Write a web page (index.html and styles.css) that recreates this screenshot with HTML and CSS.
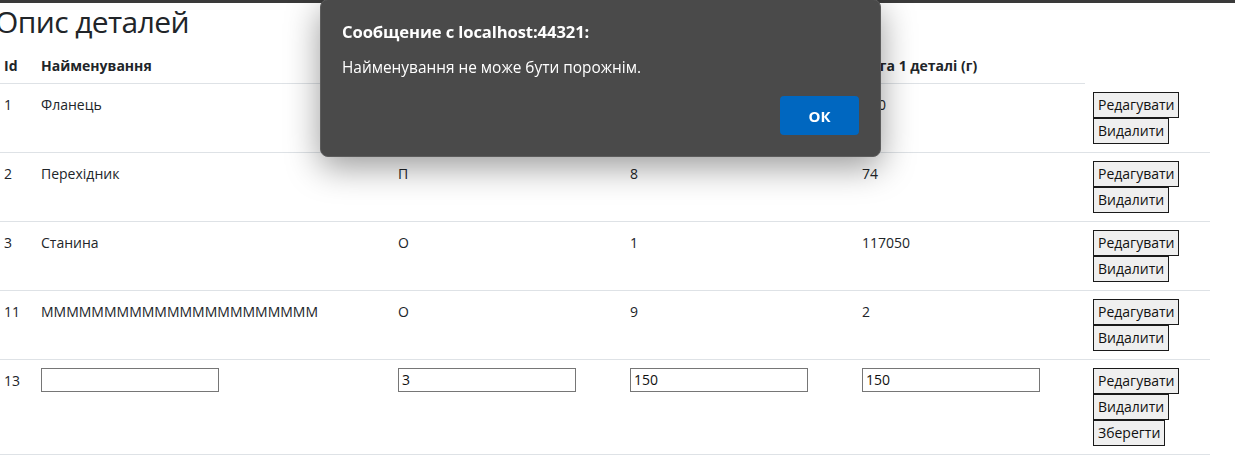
FILE: index.html
```html
<!DOCTYPE html>
<html lang="uk">
<head>
<meta charset="utf-8">
<title>Опис деталей</title>
<link rel="stylesheet" href="styles.css">
</head>
<body>
<div class="topbar"></div>
<main class="page">
  <h3 class="title">Опис деталей</h3>
  <table class="parts">
    <colgroup>
      <col class="c-id"><col class="c-name"><col class="c-type"><col class="c-qty"><col class="c-weight"><col class="c-actions">
    </colgroup>
    <thead>
      <tr>
        <th>Id</th>
        <th>Найменування</th>
        <th>Тип</th>
        <th>Кількість</th>
        <th>Вага 1 деталі (г)</th>
      </tr>
    </thead>
    <tbody>
      <tr>
        <td>1</td><td>Фланець</td><td>О</td><td>4</td><td>150</td>
        <td class="act-cell"><div class="actions"><button class="btn">Редагувати</button><button class="btn">Видалити</button></div></td>
      </tr>
      <tr>
        <td>2</td><td>Перехідник</td><td>П</td><td>8</td><td>74</td>
        <td class="act-cell"><div class="actions"><button class="btn">Редагувати</button><button class="btn">Видалити</button></div></td>
      </tr>
      <tr>
        <td>3</td><td>Станина</td><td>О</td><td>1</td><td>117050</td>
        <td class="act-cell"><div class="actions"><button class="btn">Редагувати</button><button class="btn">Видалити</button></div></td>
      </tr>
      <tr>
        <td>11</td><td>MMMMMMMMMMMMMMMMMMMMMM</td><td>О</td><td>9</td><td>2</td>
        <td class="act-cell"><div class="actions"><button class="btn">Редагувати</button><button class="btn">Видалити</button></div></td>
      </tr>
      <tr>
        <td>13</td>
        <td class="input-cell"><input class="field" type="text" value=""></td>
        <td class="input-cell"><input class="field" type="text" value="3"></td>
        <td class="input-cell"><input class="field" type="text" value="150"></td>
        <td class="input-cell"><input class="field" type="text" value="150"></td>
        <td class="act-cell"><div class="actions"><button class="btn">Редагувати</button><button class="btn">Видалити</button><button class="btn">Зберегти</button></div></td>
      </tr>
    </tbody>
  </table>
</main>

<div class="alert" role="alertdialog">
  <div class="alert-title">Сообщение с localhost:44321:</div>
  <div class="alert-msg">Найменування не може бути порожнім.</div>
  <div class="alert-actions"><button class="alert-ok">ОК</button></div>
</div>
</body>
</html>
```
FILE: styles.css
```css
html, body {
  margin: 0;
  padding: 0;
  background: #fff;
}
body {
  font-family: "Open Sans", "Noto Sans", sans-serif;
  font-size: 14px;
  line-height: 24px;
  color: #212529;
  overflow: hidden;
}
.topbar {
  height: 3px;
  background: #3a3a3a;
}
.page {
  margin-left: -4px;
}
.title {
  margin: 0 0 4px -1px;
  font-size: 30px;
  font-weight: 500;
  line-height: 38px;
  color: #212529;
  letter-spacing: -0.6px;
}
.parts {
  width: 1214px;
  border-collapse: collapse;
  table-layout: fixed;
}
.c-id { width: 37px; }
.c-name { width: 357px; }
.c-type { width: 232px; }
.c-qty { width: 232px; }
.c-weight { width: 231px; }
.c-actions { width: 125px; }
.parts th {
  text-align: left;
  font-weight: 700;
  padding: 9px 8px 5px;
  border-bottom: 1px solid #dee2e6;
  white-space: nowrap;
}
.parts td {
  padding: 9px 8px 7px;
  vertical-align: top;
  border-bottom: 1px solid #dee2e6;
  white-space: nowrap;
}
.parts td.act-cell,
.parts td.input-cell {
  padding: 8px;
}
.actions {
  display: flex;
  flex-direction: column;
  align-items: flex-start;
}
.btn {
  font-family: inherit;
  font-size: 14px;
  line-height: 22px;
  height: 26px;
  padding: 1px 4px;
  margin: 0;
  border: 1px solid #1a1a1a;
  background: #efefef;
  color: #111;
  border-radius: 0;
}
.field {
  display: block;
  box-sizing: border-box;
  width: 178px;
  height: 24px;
  margin: 0;
  padding: 1px 3px;
  border: 1px solid #767676;
  font-family: inherit;
  font-size: 14px;
  color: #111;
  background: #fff;
}
.alert {
  position: fixed;
  left: 320px;
  top: -1px;
  width: 561px;
  box-sizing: border-box;
  padding: 21px;
  background: #4a4a4a;
  border: 1px solid #5c5c5c;
  border-radius: 8px;
  box-shadow: 0 10px 34px rgba(0, 0, 0, 0.4);
  color: #fff;
}
.alert-title {
  font-weight: 700;
  font-size: 16.6px;
  line-height: 22px;
  letter-spacing: -0.1px;
}
.alert-msg {
  margin-top: 14px;
  font-size: 15.4px;
  line-height: 22px;
}
.alert-actions {
  margin-top: 17px;
  display: flex;
  justify-content: flex-end;
}
.alert-ok {
  width: 79px;
  height: 39px;
  border: none;
  border-radius: 4px;
  background: #0067c0;
  color: #fff;
  font-family: inherit;
  font-weight: 700;
  font-size: 15px;
}
```
